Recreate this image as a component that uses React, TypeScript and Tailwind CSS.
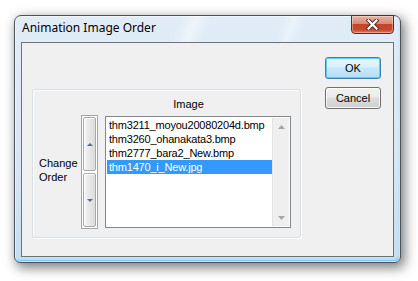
import React from "react";

const items = [
  "thm3211_moyou20080204d.bmp",
  "thm3260_ohanakata3.bmp",
  "thm2777_bara2_New.bmp",
  "thm1470_i_New.jpg",
];

function Tri({ up, color, w = 7, h = 4 }: { up: boolean; color: string; w?: number; h?: number }) {
  const pts = up ? `0,${h} ${w / 2},0 ${w},${h}` : `0,0 ${w / 2},${h} ${w},0`;
  return (
    <svg width={w} height={h} viewBox={`0 0 ${w} ${h}`} className="block">
      <polygon points={pts} fill={color} />
    </svg>
  );
}

function SpinBtn({ up }: { up: boolean }) {
  return (
    <div className="flex-1 flex items-center justify-center border border-[#a8a8a8] rounded-[2px] bg-[linear-gradient(90deg,#f4f4f4_0%,#e8e8e8_45%,#dcdcdc_100%)] shadow-[inset_1px_1px_0_#ffffff]">
      <Tri up={up} color="#5a6b94" w={6} h={3} />
    </div>
  );
}

export default function App() {
  return (
    <div className="w-[418px] h-[281px] bg-white pt-[15px] pl-[14px] overflow-hidden font-['Liberation_Sans',Arial,sans-serif] text-[11px] text-black">
      <div className="w-[387px] h-[248px] flex flex-col rounded-t-[7px] rounded-b-[6px] border border-[#4b535e] bg-[linear-gradient(180deg,#e1ecf8_0%,#d9e7f5_55%,#c4def2_100%)] shadow-[3px_4px_12px_1px_rgba(0,0,0,0.5),inset_0_0_0_1px_rgba(255,255,255,0.55),inset_-1px_-2px_1px_rgba(90,195,245,0.75)]">
        {/* Title bar */}
        <div className="h-[26px] flex items-start rounded-t-[6px] bg-[linear-gradient(112deg,transparent_0%,transparent_42%,rgba(255,255,255,0.45)_46%,transparent_50%,transparent_68%,rgba(255,255,255,0.35)_71%,transparent_74%)]">
          <div className="pl-[7px] pt-[4px] leading-[16px] text-[12px] font-['Noto_Sans',sans-serif] text-[#000]">
            Animation Image Order
          </div>
          <div className="ml-auto mr-[6px] -mt-[1px] w-[43px] h-[19px] flex items-center justify-center border border-[#6b2418] rounded-b-[4px] bg-[linear-gradient(180deg,#eab3a5_0%,#d98a77_45%,#c4452c_50%,#c9472c_80%,#e0785c_100%)] shadow-[inset_0_0_0_1px_rgba(255,255,255,0.35)]">
            <svg width="13" height="11" viewBox="0 0 13 11" className="block">
              <path d="M2.5 1.5 L10.5 9.5 M10.5 1.5 L2.5 9.5" stroke="#4b2a25" strokeWidth="4" strokeLinecap="square" />
              <path d="M2.5 1.5 L10.5 9.5 M10.5 1.5 L2.5 9.5" stroke="#ffffff" strokeWidth="2.2" strokeLinecap="square" />
            </svg>
          </div>
        </div>

        {/* Client area */}
        <div className="mx-[6px] h-[215px] border border-[#6b737d] bg-[#f0f0f0] flex items-start">
          {/* Group box */}
          <div className="ml-[10px] mt-[46px] w-[269px] h-[149px] border border-[#d5dfe5] rounded-[3px] shadow-[1px_1px_0_#ffffff,inset_1px_1px_0_#ffffff] flex flex-col">
            <div className="mt-[8px] flex">
              <div className="w-[72px]" />
              <div className="w-[167px] text-center leading-[13px]">Image</div>
            </div>
            <div className="mt-[4px] flex items-start">
              <div className="ml-[6px] w-[42px] mt-[41px] leading-[14px]">
                Change
                <br />
                Order
              </div>
              {/* Spinner */}
              <div className="w-[17px] h-[114px] border border-[#a5a5a5] bg-white p-[1px] flex flex-col gap-[2px]">
                <SpinBtn up />
                <SpinBtn up={false} />
              </div>
              {/* Listbox */}
              <div className="ml-[7px] mt-[1px] w-[186px] h-[112px] border border-[#828790] bg-white p-[1px] flex">
                <div className="flex-1 flex flex-col">
                  {items.map((t, i) => (
                    <div
                      key={t}
                      className={
                        i === 3
                          ? "h-[14px] leading-[14px] pl-[2px] bg-[#3399ff] text-white whitespace-nowrap tracking-[-0.2px]"
                          : "h-[14px] leading-[14px] pl-[2px] text-black whitespace-nowrap tracking-[-0.2px]"
                      }
                    >
                      {t}
                    </div>
                  ))}
                </div>
                <div className="w-[17px] bg-[#efefef] border-l border-[#e4e4e4] flex flex-col justify-between">
                  <div className="h-[17px] flex items-center justify-center">
                    <Tri up color="#a6a6a6" />
                  </div>
                  <div className="h-[17px] flex items-center justify-center">
                    <Tri up={false} color="#a6a6a6" />
                  </div>
                </div>
              </div>
            </div>
          </div>

          {/* Buttons */}
          <div className="ml-[24px] mt-[14px] flex flex-col gap-[8px]">
            <div className="w-[56px] h-[22px] flex items-center justify-center border border-[#3c7fb1] rounded-[3px] shadow-[inset_0_0_0_1px_#5fd0fb] bg-[linear-gradient(180deg,#eaf6fd_0%,#d9f0fc_45%,#c6e8fb_50%,#b5ddf4_100%)] leading-[13px]">
              OK
            </div>
            <div className="w-[56px] h-[22px] flex items-center justify-center border border-[#707070] rounded-[3px] shadow-[inset_0_0_0_1px_rgba(255,255,255,0.8)] bg-[linear-gradient(180deg,#f2f2f2_0%,#ebebeb_45%,#dddddd_50%,#cfcfcf_100%)] leading-[13px]">
              Cancel
            </div>
          </div>
        </div>
      </div>
    </div>
  );
}
